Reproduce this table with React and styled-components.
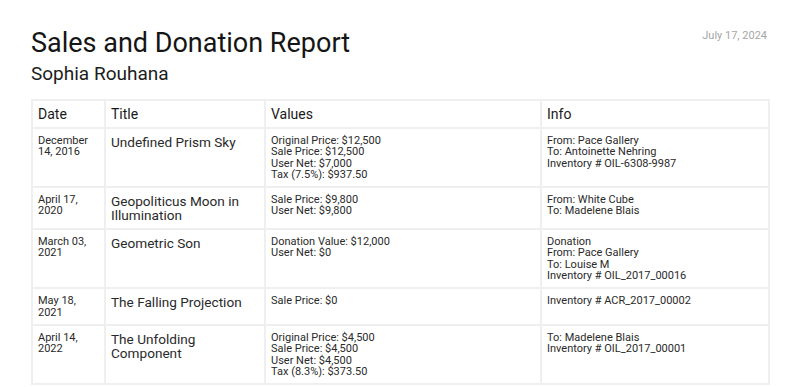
import React from "react";
import styled, { createGlobalStyle } from "styled-components";

const GlobalStyle = createGlobalStyle`
  body {
    margin: 0;
    background: #ffffff;
    font-family: Roboto, "Liberation Sans", sans-serif;
    color: #222;
  }
`;

const Page = styled.div`
  padding: 26px 33px 0 31px;
`;

const Header = styled.header`
  display: flex;
  justify-content: space-between;
  align-items: flex-start;
`;

const Heading = styled.div`
  display: flex;
  flex-direction: column;
`;

const Title = styled.h1`
  margin: 0;
  font-size: 27px;
  font-weight: 400;
  line-height: 34px;
  color: #151515;
`;

const Subtitle = styled.h2`
  margin: 0;
  font-size: 19px;
  font-weight: 400;
  line-height: 27px;
  color: #1c1c1c;
`;

const ReportDate = styled.div`
  margin-top: 3px;
  font-size: 11px;
  color: #a6a6a6;
`;

const Table = styled.table`
  margin-top: 12px;
  width: 737px;
  border-collapse: collapse;
  table-layout: fixed;
`;

const Th = styled.th`
  padding: 6px 5px;
  border: 2px solid #efefef;
  text-align: left;
  font-size: 14px;
  font-weight: 400;
  line-height: 14px;
  color: #1a1a1a;
  vertical-align: top;
`;

const Td = styled.td`
  padding: 6px 5px;
  border: 2px solid #efefef;
  vertical-align: top;
  color: #2a2a2a;
  font-size: ${(p) => (p.$large ? "13.6px" : "11px")};
  line-height: ${(p) => (p.$large ? "14px" : "11.3px")};
`;

const Line = styled.div`
  white-space: nowrap;
`;

const rows = [
  {
    date: "December 14, 2016",
    title: "Undefined Prism Sky",
    values: ["Original Price: $12,500", "Sale Price: $12,500", "User Net: $7,000", "Tax (7.5%): $937.50"],
    info: ["From: Pace Gallery", "To: Antoinette Nehring", "Inventory # OIL-6308-9987"],
  },
  {
    date: "April 17, 2020",
    title: "Geopoliticus Moon in Illumination",
    values: ["Sale Price: $9,800", "User Net: $9,800"],
    info: ["From: White Cube", "To: Madelene Blais"],
  },
  {
    date: "March 03, 2021",
    title: "Geometric Son",
    values: ["Donation Value: $12,000", "User Net: $0"],
    info: ["Donation", "From: Pace Gallery", "To: Louise M", "Inventory # OIL_2017_00016"],
  },
  {
    date: "May 18, 2021",
    title: "The Falling Projection",
    values: ["Sale Price: $0"],
    info: ["Inventory # ACR_2017_00002"],
  },
  {
    date: "April 14, 2022",
    title: "The Unfolding Component",
    values: ["Original Price: $4,500", "Sale Price: $4,500", "User Net: $4,500", "Tax (8.3%): $373.50"],
    info: ["To: Madelene Blais", "Inventory # OIL_2017_00001"],
  },
];

const App = () => {
  return (
    <Page>
      <GlobalStyle />
      <Header>
        <Heading>
          <Title>Sales and Donation Report</Title>
          <Subtitle>Sophia Rouhana</Subtitle>
        </Heading>
        <ReportDate>July 17, 2024</ReportDate>
      </Header>
      <Table>
        <colgroup>
          <col style={{ width: 73 }} />
          <col style={{ width: 160 }} />
          <col style={{ width: 276 }} />
          <col style={{ width: 228 }} />
        </colgroup>
        <thead>
          <tr>
            <Th>Date</Th>
            <Th>Title</Th>
            <Th>Values</Th>
            <Th>Info</Th>
          </tr>
        </thead>
        <tbody>
          {rows.map((r) => (
            <tr key={r.title}>
              <Td>{r.date}</Td>
              <Td $large>{r.title}</Td>
              <Td>
                {r.values.map((v) => (
                  <Line key={v}>{v}</Line>
                ))}
              </Td>
              <Td>
                {r.info.map((v) => (
                  <Line key={v}>{v}</Line>
                ))}
              </Td>
            </tr>
          ))}
        </tbody>
      </Table>
    </Page>
  );
};

export default App;
